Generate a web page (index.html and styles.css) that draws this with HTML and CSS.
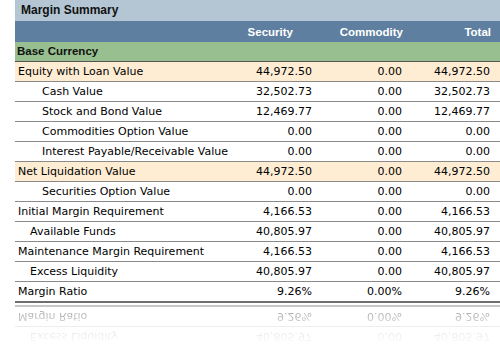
FILE: index.html
```html
<!DOCTYPE html>
<html>
<head>
  <title>Margin Summary</title>
  <link rel="stylesheet" href="styles.css">
</head>
<body>
  <div class="summary">
    <div class="title">Margin Summary</div>
    <div class="head">
      <span></span>
      <span>Security</span>
      <span>Commodity</span>
      <span>Total</span>
    </div>
    <div class="section">Base Currency</div>

    <div class="row key"><span>Equity with Loan Value</span><span>44,972.50</span><span>0.00</span><span>44,972.50</span></div>
    <div class="row sub"><span>Cash Value</span><span>32,502.73</span><span>0.00</span><span>32,502.73</span></div>
    <div class="row sub"><span>Stock and Bond Value</span><span>12,469.77</span><span>0.00</span><span>12,469.77</span></div>
    <div class="row sub"><span>Commodities Option Value</span><span>0.00</span><span>0.00</span><span>0.00</span></div>
    <div class="row sub"><span>Interest Payable/Receivable Value</span><span>0.00</span><span>0.00</span><span>0.00</span></div>
    <div class="row key"><span>Net Liquidation Value</span><span>44,972.50</span><span>0.00</span><span>44,972.50</span></div>
    <div class="row sub"><span>Securities Option Value</span><span>0.00</span><span>0.00</span><span>0.00</span></div>
    <div class="row"><span>Initial Margin Requirement</span><span>4,166.53</span><span>0.00</span><span>4,166.53</span></div>
    <div class="row half"><span>Available Funds</span><span>40,805.97</span><span>0.00</span><span>40,805.97</span></div>
    <div class="row"><span>Maintenance Margin Requirement</span><span>4,166.53</span><span>0.00</span><span>4,166.53</span></div>
    <div class="row half"><span>Excess Liquidity</span><span>40,805.97</span><span>0.00</span><span>40,805.97</span></div>
    <div class="row last"><span>Margin Ratio</span><span>9.26%</span><span>0.00%</span><span>9.26%</span></div>

    <!-- mirrored copy of the last rows -->
    <div class="reflection">
      <div class="row half"><span>Excess Liquidity</span><span>40,805.97</span><span>0.00</span><span>40,805.97</span></div>
      <div class="row last"><span>Margin Ratio</span><span>9.26%</span><span>0.00%</span><span>9.26%</span></div>
    </div>
  </div>
</body>
</html>
```

FILE: styles.css
```css
/* Margin summary panel */
body {
  margin: 0;
  background-color: #fff;
  font-family: "DejaVu Sans", Verdana, sans-serif;
  font-size: 11px;
  color: #000;
}
.summary {
  margin-left: 15px;
  width: 485px;
  overflow: hidden;
}
.title {
  height: 21px;
  line-height: 21px;
  padding-left: 6px;
  background-color: #b4c6d3; /* light steel blue */
  font-family: "Liberation Sans", Arial, sans-serif;
  font-size: 12px;
  font-weight: bold;
  color: #111;
}
.head {
  display: grid;
  grid-template-columns: minmax(0, 1fr) 90px 110px 88px;
  height: 21px;
  align-items: center;
  padding-right: 9px;
  background-color: #5e7fa0; /* dark steel blue */
  font-family: "Liberation Sans", Arial, sans-serif;
  font-size: 11.5px;
  font-weight: bold;
  color: #fff;
  text-align: right;
}
.section {
  height: 19px;
  line-height: 19px;
  padding-left: 2px;
  background-color: #97bf8f; /* green band */
  border-bottom: 1px solid #555;
  font-family: "Liberation Sans", Arial, sans-serif;
  font-size: 11.5px;
  font-weight: bold;
  color: #111;
}
.row {
  display: grid;
  grid-template-columns: minmax(0, 1fr) 90px 90px 88px;
  height: 19px;
  align-items: center;
  padding-right: 10px;
  border-bottom: 1px solid #8a8a8a;
  white-space: nowrap;
}
.row span {
  text-align: right;
}
.row span:first-child {
  text-align: left;
  padding-left: 3px;
}
.row.key {
  background-color: #feecd3; /* peach highlight */
}
.row.sub span:first-child {
  padding-left: 27px;
}
.row.half span:first-child {
  padding-left: 15px;
}
.row.last {
  border-bottom: 2px solid #6e6e6e;
}
.reflection {
  margin-top: 2px;
  transform: scaleY(-1);
  -webkit-mask-image: linear-gradient(to top, rgba(0, 0, 0, 0.4), rgba(0, 0, 0, 0.1) 60%, transparent);
  mask-image: linear-gradient(to top, rgba(0, 0, 0, 0.4), rgba(0, 0, 0, 0.1) 60%, transparent);
}
```
